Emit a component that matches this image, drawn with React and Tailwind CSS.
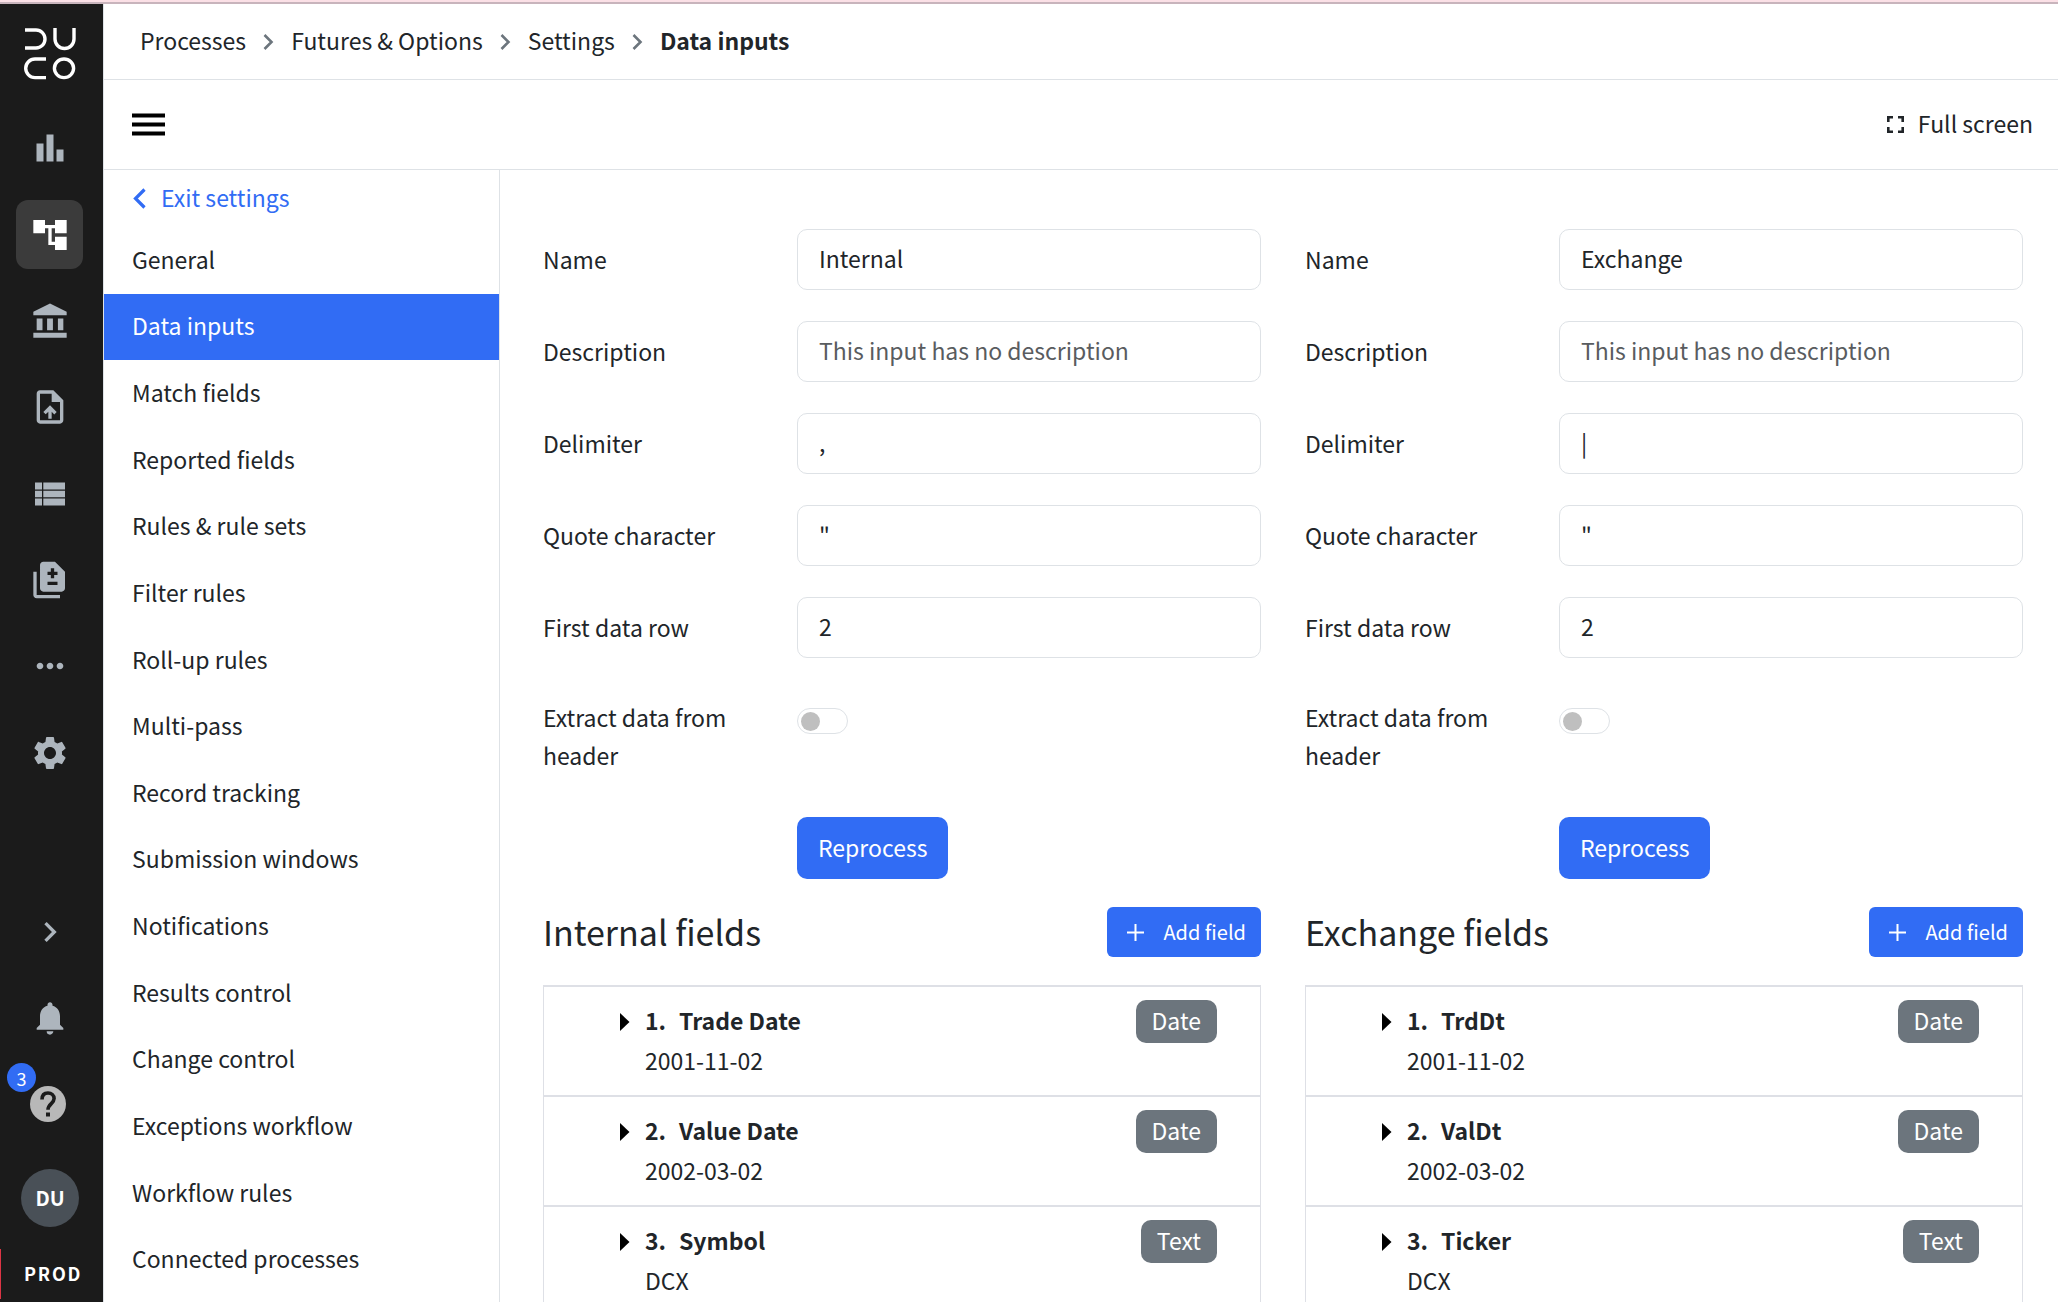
import { useId, useState } from 'react';
import {
    MdAccountTree,
    MdChevronRight,
    MdDifference,
    MdMoreHoriz,
    MdNotifications,
    MdSettings,
} from 'react-icons/md';

function Logo() {
    return (
        <svg width="52" height="52" viewBox="0 0 52 52" fill="none" stroke="#fff" strokeWidth="3.4">
            <path d="M1 2h11a9 9 0 0 1 0 18H1" />
            <path d="M31 0v11a9.5 9.5 0 0 0 19 0V0" />
            <path d="M22 31H11a9.3 9.3 0 0 0 0 18.600h11" />
            <ellipse cx="40" cy="40.300" rx="9.600" ry="9.300" />
        </svg>
    );
}

function BarsIcon() {
    return (
        <svg width="40" height="40" viewBox="0 0 40 40" fill="currentColor">
            <path d="M6.500 15.500h7v18h-7zM16.500 6.500h7v27h-7zM26.500 21.500h7v12h-7z" />
        </svg>
    );
}

function BankIcon() {
    return (
        <svg width="40" height="40" viewBox="0 0 24 24" fill="currentColor">
            <path d="M4 10.500h3.500v7H4zM10.250 10.500h3.500v7h-3.500zM16.750 10.500h3.250v7h-3.250zM2 19h20v3H2zM12 1.500L2 6.500v2h20v-2z" />
        </svg>
    );
}

function UploadIcon() {
    return (
        <svg width="40" height="40" viewBox="0 0 24 24" fill="currentColor">
            <path d="M14 2H6c-1.100 0-2 .9-2 2v16c0 1.100.9 2 2 2h12c1.100 0 2-.9 2-2V8l-6-6zm4 18H6V4h7v5h5v11z" />
            <path d="M8 15.010l1.410 1.410L11 14.840V19h2v-4.160l1.590 1.590L16 15.010 12.010 11z" />
        </svg>
    );
}

function ListIcon() {
    return (
        <svg width="40" height="40" viewBox="0 0 40 40" fill="currentColor">
            <path d="M5 8.500h7v7H5zM13.300 8.500H35v7H13.300zM5 16.700h7v6.600H5zM13.300 16.700H35v6.600H13.300zM5 24.500h7v7H5zM13.300 24.500H35v7H13.300z" />
        </svg>
    );
}

function HelpIcon() {
    return (
        <svg width="38" height="38" viewBox="0 0 38 38" fill="none">
            <circle cx="19" cy="19" r="18" fill="#b8b8b8" />
            <path
                d="M13 14.500c0-4.500 2.600-6.500 6-6.500s6.100 2.200 6.100 5.600c0 4.900-6.100 5.200-6.100 11.200"
                stroke="#1b1b1b"
                strokeWidth="3.600"
            />
            <path d="M17 27.500h4v4h-4z" fill="#1b1b1b" />
        </svg>
    );
}

const railItems = [
    { label: 'Dashboards', icon: <BarsIcon /> },
    { label: 'Processes', icon: <MdAccountTree size={40} />, active: true },
    { label: 'Institutions', icon: <BankIcon /> },
    { label: 'Uploads', icon: <UploadIcon /> },
    { label: 'Lists', icon: <ListIcon /> },
    { label: 'Comparisons', icon: <MdDifference size={40} /> },
    { label: 'More', icon: <MdMoreHoriz size={40} /> },
    { label: 'Settings', icon: <MdSettings size={40} /> },
];

const settingsItems = [
    'General',
    'Data inputs',
    'Match fields',
    'Reported fields',
    'Rules & rule sets',
    'Filter rules',
    'Roll-up rules',
    'Multi-pass',
    'Record tracking',
    'Submission windows',
    'Notifications',
    'Results control',
    'Change control',
    'Exceptions workflow',
    'Workflow rules',
    'Connected processes',
];

const inputs = [
    {
        name: 'Internal',
        delimiter: ',',
        fields: [
            { name: 'Trade Date', sample: '2001-11-02', type: 'Date' },
            { name: 'Value Date', sample: '2002-03-02', type: 'Date' },
            { name: 'Symbol', sample: 'DCX', type: 'Text' },
        ],
    },
    {
        name: 'Exchange',
        delimiter: '|',
        fields: [
            { name: 'TrdDt', sample: '2001-11-02', type: 'Date' },
            { name: 'ValDt', sample: '2002-03-02', type: 'Date' },
            { name: 'Ticker', sample: 'DCX', type: 'Text' },
        ],
    },
];

function Rail() {
    return (
        <aside className="flex w-[103px] shrink-0 flex-col bg-[#1b1b1b] text-[#adb5bd]">
            <a href="#home" aria-label="Duco" className="flex h-[101px] shrink-0 pl-6 pt-6">
                <Logo />
            </a>
            <ul className="grid h-[691px] shrink-0 auto-rows-fr">
                {railItems.map((item) => (
                    <li key={item.label} className="flex items-center pl-4">
                        <button
                            type="button"
                            aria-label={item.label}
                            className={`flex h-[69px] w-[67px] items-center justify-center rounded-xl ${
                                item.active ? 'bg-[#3b3b3b] text-white' : ''
                            }`}
                        >
                            {item.icon}
                        </button>
                    </li>
                ))}
            </ul>
            <div className="mt-auto flex flex-col">
                <button type="button" aria-label="Expand" className="flex h-[86px] w-[100px] items-center justify-center">
                    <MdChevronRight size={40} />
                </button>
                <button type="button" aria-label="Notifications" className="flex h-[86px] w-[100px] items-center justify-center">
                    <MdNotifications size={40} />
                </button>
                <button type="button" aria-label="Help" className="relative flex h-[86px] w-24 items-center justify-center">
                    <HelpIcon />
                    <span className="absolute left-[7px] top-[2px] flex h-[29px] w-[29px] items-center justify-center rounded-full bg-[#316cf4] text-lg leading-none text-white">
                        3
                    </span>
                </button>
                <button
                    type="button"
                    className="ml-[21px] mt-[22px] flex h-[58px] w-[58px] items-center justify-center rounded-full bg-[#495057] text-xl font-bold text-white"
                >
                    DU
                </button>
                <p className="mb-[3px] mt-[22px] border-l border-[#dc3545] pb-[2px] pl-[23px] text-lg font-bold leading-[48px] tracking-widest text-white">
                    PROD
                </p>
            </div>
        </aside>
    );
}

function Breadcrumbs() {
    return (
        <nav aria-label="Breadcrumb" className="flex h-[76px] shrink-0 items-center border-b border-[#dee2e6] pl-9">
            <ol className="flex items-center">
                {['Processes', 'Futures & Options', 'Settings'].map((crumb) => (
                    <li key={crumb} className="flex items-center">
                        <a href="#crumb" className="pb-1">
                            {crumb}
                        </a>
                        <svg width="11" height="16" viewBox="0 0 11 16" fill="none" className="mx-[17px]">
                            <path d="M1.500 1l7 7-7 7" stroke="#6c757d" strokeWidth="2.600" />
                        </svg>
                    </li>
                ))}
                <li className="pb-1 font-bold" aria-current="page">
                    Data inputs
                </li>
            </ol>
        </nav>
    );
}

function Toolbar() {
    return (
        <div className="flex h-[90px] shrink-0 items-center justify-between border-b border-[#dee2e6] pl-7 pr-[25px]">
            <button type="button" aria-label="Menu">
                <svg width="33" height="23" viewBox="0 0 33 23">
                    <path d="M0 .5h33v4H0zM0 9.500h33v4H0zM0 18.500h33v4H0z" />
                </svg>
            </button>
            <button type="button" className="flex items-center gap-[14px]">
                <svg width="17" height="17" viewBox="0 0 17 17" fill="none" stroke="#212529" strokeWidth="2.600">
                    <path d="M1.300 6V1.300H6M11 1.300h4.700V6M15.700 11v4.700H11M6 15.700H1.300V11" />
                </svg>
                <span className="pb-1">Full screen</span>
            </button>
        </div>
    );
}

function SettingsNav() {
    const [current, setCurrent] = useState('Data inputs');

    return (
        <nav aria-label="Settings" className="flex w-[396px] shrink-0 flex-col border-r border-[#dee2e6] pb-[9px]">
            <a href="#exit" className="flex h-[57px] shrink-0 items-center gap-[15px] pl-[29px] text-[#316cf4]">
                <svg width="13" height="21" viewBox="0 0 13 21" fill="none">
                    <path d="M11.500 1.500l-9 9 9 9" stroke="currentColor" strokeWidth="3.200" />
                </svg>
                <span className="pb-1">Exit settings</span>
            </a>
            <ul className="grid flex-1 auto-rows-fr">
                {settingsItems.map((item) => (
                    <li key={item} className="flex">
                        <a
                            href="#section"
                            onClick={() => setCurrent(item)}
                            className={`flex flex-1 items-center pb-[3px] pl-[28px] ${
                                current === item ? 'bg-[#316cf4] text-white' : ''
                            }`}
                        >
                            {item}
                        </a>
                    </li>
                ))}
            </ul>
        </nav>
    );
}

function TextRow({ label, value, placeholder }) {
    const id = useId();

    return (
        <div className="flex items-center">
            <label htmlFor={id} className="w-[254px] shrink-0 pb-[2px]">
                {label}
            </label>
            <input
                id={id}
                type="text"
                defaultValue={value}
                placeholder={placeholder}
                className="h-[61px] min-w-0 flex-1 rounded-[10px] border border-[#dee2e6] px-[21px] pb-[3px] placeholder:text-[#595c5f]"
            />
        </div>
    );
}

function FieldList({ fields }) {
    return (
        <ol className="mt-7 border-x border-[#dee0e6]">
            {fields.map((field, index) => (
                <li key={field.name} className="flex h-[110px] items-start border-t-2 border-[#dee0e6] pl-[76px] pr-[43px] pt-[13px]">
                    <svg width="10" height="18" viewBox="0 0 10 18" className="mr-[15px] mt-[13px] shrink-0">
                        <path d="M0 0l9.500 9L0 18z" />
                    </svg>
                    <div className="flex-1 leading-10">
                        <p className="flex font-bold">
                            <span className="w-[34px]">{index + 1}.</span>
                            {field.name}
                        </p>
                        <p>{field.sample}</p>
                    </div>
                    <span className="rounded-[10px] bg-[#6c757d] px-4 pb-[2px] leading-[41px] text-white">{field.type}</span>
                </li>
            ))}
        </ol>
    );
}

function InputPanel({ input }) {
    const switchId = useId();

    return (
        <section className="min-w-0 flex-1">
            <form onSubmit={(event) => event.preventDefault()}>
                <div className="flex flex-col gap-[31px]">
                    <TextRow label="Name" value={input.name} />
                    <TextRow label="Description" placeholder="This input has no description" />
                    <TextRow label="Delimiter" value={input.delimiter} />
                    <TextRow label="Quote character" value={'"'} />
                    <TextRow label="First data row" value="2" />
                </div>
                <div className="mt-10 flex items-start">
                    <label htmlFor={switchId} className="w-[254px] shrink-0 pr-10">
                        Extract data from header
                    </label>
                    <input
                        id={switchId}
                        type="checkbox"
                        role="switch"
                        className="mt-[10px] flex h-[26px] w-[51px] appearance-none items-center rounded-full border border-[#dee2e6] px-[3px] before:h-[19px] before:w-[19px] before:rounded-full before:bg-[#bfbfbf] checked:justify-end checked:before:bg-[#316cf4]"
                    />
                </div>
                <button type="submit" className="ml-[254px] mt-[43px] h-[62px] rounded-[10px] bg-[#316cf4] px-[21px] pb-[2px] text-white">
                    Reprocess
                </button>
            </form>
            <div className="mt-7 flex items-center justify-between">
                <h2 className="text-[34px] leading-[50px]">{input.name} fields</h2>
                <button type="button" className="flex h-[50px] items-center gap-[19px] rounded-md bg-[#316cf4] pl-5 pr-[15px] text-xl text-white">
                    <svg width="17" height="17" viewBox="0 0 17 17" stroke="currentColor" strokeWidth="2">
                        <path d="M8.500 0v17M0 8.500h17" />
                    </svg>
                    Add field
                </button>
            </div>
            <FieldList fields={input.fields} />
        </section>
    );
}

export default function App() {
    return (
        <div className="flex h-screen flex-col overflow-hidden bg-white font-['Noto_Sans_CJK_SC',sans-serif] text-[23px] leading-[38px] text-[#212529]">
            <div className="h-1 shrink-0 border-b-2 border-[#c8b4bc] bg-[#fbe0e6]" />
            <div className="flex min-h-0 flex-1">
                <Rail />
                <div className="flex min-w-0 flex-1 flex-col border-l border-[#dee2e6]">
                    <Breadcrumbs />
                    <Toolbar />
                    <div className="flex min-h-0 flex-1">
                        <SettingsNav />
                        <main className="flex min-w-0 flex-1 gap-11 overflow-hidden pl-[43px] pr-[35px] pt-[59px]">
                            {inputs.map((input) => (
                                <InputPanel key={input.name} input={input} />
                            ))}
                        </main>
                    </div>
                </div>
            </div>
        </div>
    );
}
